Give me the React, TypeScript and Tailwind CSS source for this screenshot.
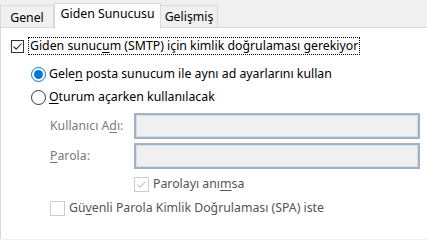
import React from "react";

function U({ children }: { children: React.ReactNode }) {
  return <span className="underline underline-offset-[2px] decoration-1">{children}</span>;
}

function Check({ checked, disabled }: { checked?: boolean; disabled?: boolean }) {
  return (
    <span
      className={`flex items-center justify-center bg-white shrink-0 border ${
        disabled ? "w-[15px] h-[15px] border-[#cccccc]" : "w-[13px] h-[13px] border-[#333333]"
      }`}
    >
      {checked && (
        <svg width="11" height="11" viewBox="0 0 11 11">
          <path
            d="M1.5 5.5 L4.2 8.2 L9.5 2.5"
            fill="none"
            stroke={disabled ? "#c4c4c4" : "#333333"}
            strokeWidth="1.1"
          />
        </svg>
      )}
    </span>
  );
}

function Radio({ checked }: { checked?: boolean }) {
  return (
    <span
      className={`flex items-center justify-center w-[15px] h-[15px] rounded-full border bg-white shrink-0 ${
        checked ? "border-[#0078d7]" : "border-[#333333]"
      }`}
    >
      {checked && <span className="w-[9px] h-[9px] rounded-full bg-[#0078d7]" />}
    </span>
  );
}

function Field() {
  return (
    <div className="w-[286px] h-[26px] border-2 border-[#aab0ba] bg-[#f0f0f0] shadow-[inset_1px_1px_0_#c9dff5,inset_-1px_-1px_0_#c9dff5]" />
  );
}

export default function App() {
  return (
    <div
      className="w-[427px] h-[240px] bg-[#f0f0f0] overflow-hidden text-[12.3px] text-black"
      style={{ fontFamily: '"Noto Sans", "Open Sans", sans-serif' }}
    >
      {/* Tabs */}
      <div className="flex items-end h-[28px]">
        <div className="h-[23px] w-[54px] border border-b-0 border-[#d9d9d9] flex items-center justify-center pt-[3px]">
          Genel
        </div>
        <div className="relative z-10 h-[26px] -mb-px w-[107px] bg-white border border-b-0 border-[#d9d9d9] flex items-center justify-center pb-[5px]">
          Giden Sunucusu
        </div>
        <div className="h-[23px] w-[57px] border border-l-0 border-b-0 border-[#d9d9d9] flex items-center justify-center pt-[1px]">
          Gelişmiş
        </div>
      </div>

      {/* Panel */}
      <div className="bg-white border-l border-t border-[#d9d9d9] h-[212px] -mt-px pt-[9px] leading-none">
        <div className="flex items-center h-[18px] pl-[10px] gap-[4px]">
          <Check checked />
          <span className="h-[18px] flex items-center px-[1px] border border-dotted border-black">
            Giden sunuc<U>u</U>m (SMTP) için kimlik doğrulaması gerekiyor
          </span>
        </div>

        <div className="flex items-center h-[16px] mt-[11px] pl-[30px] gap-[3px]">
          <Radio checked />
          <span>
            Gele<U>n</U> posta sunucum ile aynı ad ayarlarını kullan
          </span>
        </div>

        <div className="flex items-center h-[16px] mt-[7px] pl-[30px] gap-[3px]">
          <Radio />
          <span>
            <U>O</U>turum açarken kullanılacak
          </span>
        </div>

        <div className="flex items-center h-[26px] mt-[8px] pl-[49px]">
          <span className="w-[84px] text-[#7a7a7a]">
            Kullanıcı A<U>d</U>ı:
          </span>
          <Field />
        </div>

        <div className="flex items-center h-[26px] mt-[4px] pl-[49px]">
          <span className="w-[84px] text-[#7a7a7a]">
            <U>P</U>arola:
          </span>
          <Field />
        </div>

        <div className="flex items-center h-[15px] mt-[8px] pl-[133px] gap-[4px]">
          <Check checked disabled />
          <span className="text-[#555555]">
            Parolayı anı<U>m</U>sa
          </span>
        </div>

        <div className="flex items-center h-[16px] mt-[8px] pl-[49px] gap-[4px]">
          <Check disabled />
          <span className="text-[#555555]">
            Gü<U>v</U>enli Parola Kimlik Doğrulaması (SPA) iste
          </span>
        </div>
      </div>
    </div>
  );
}
